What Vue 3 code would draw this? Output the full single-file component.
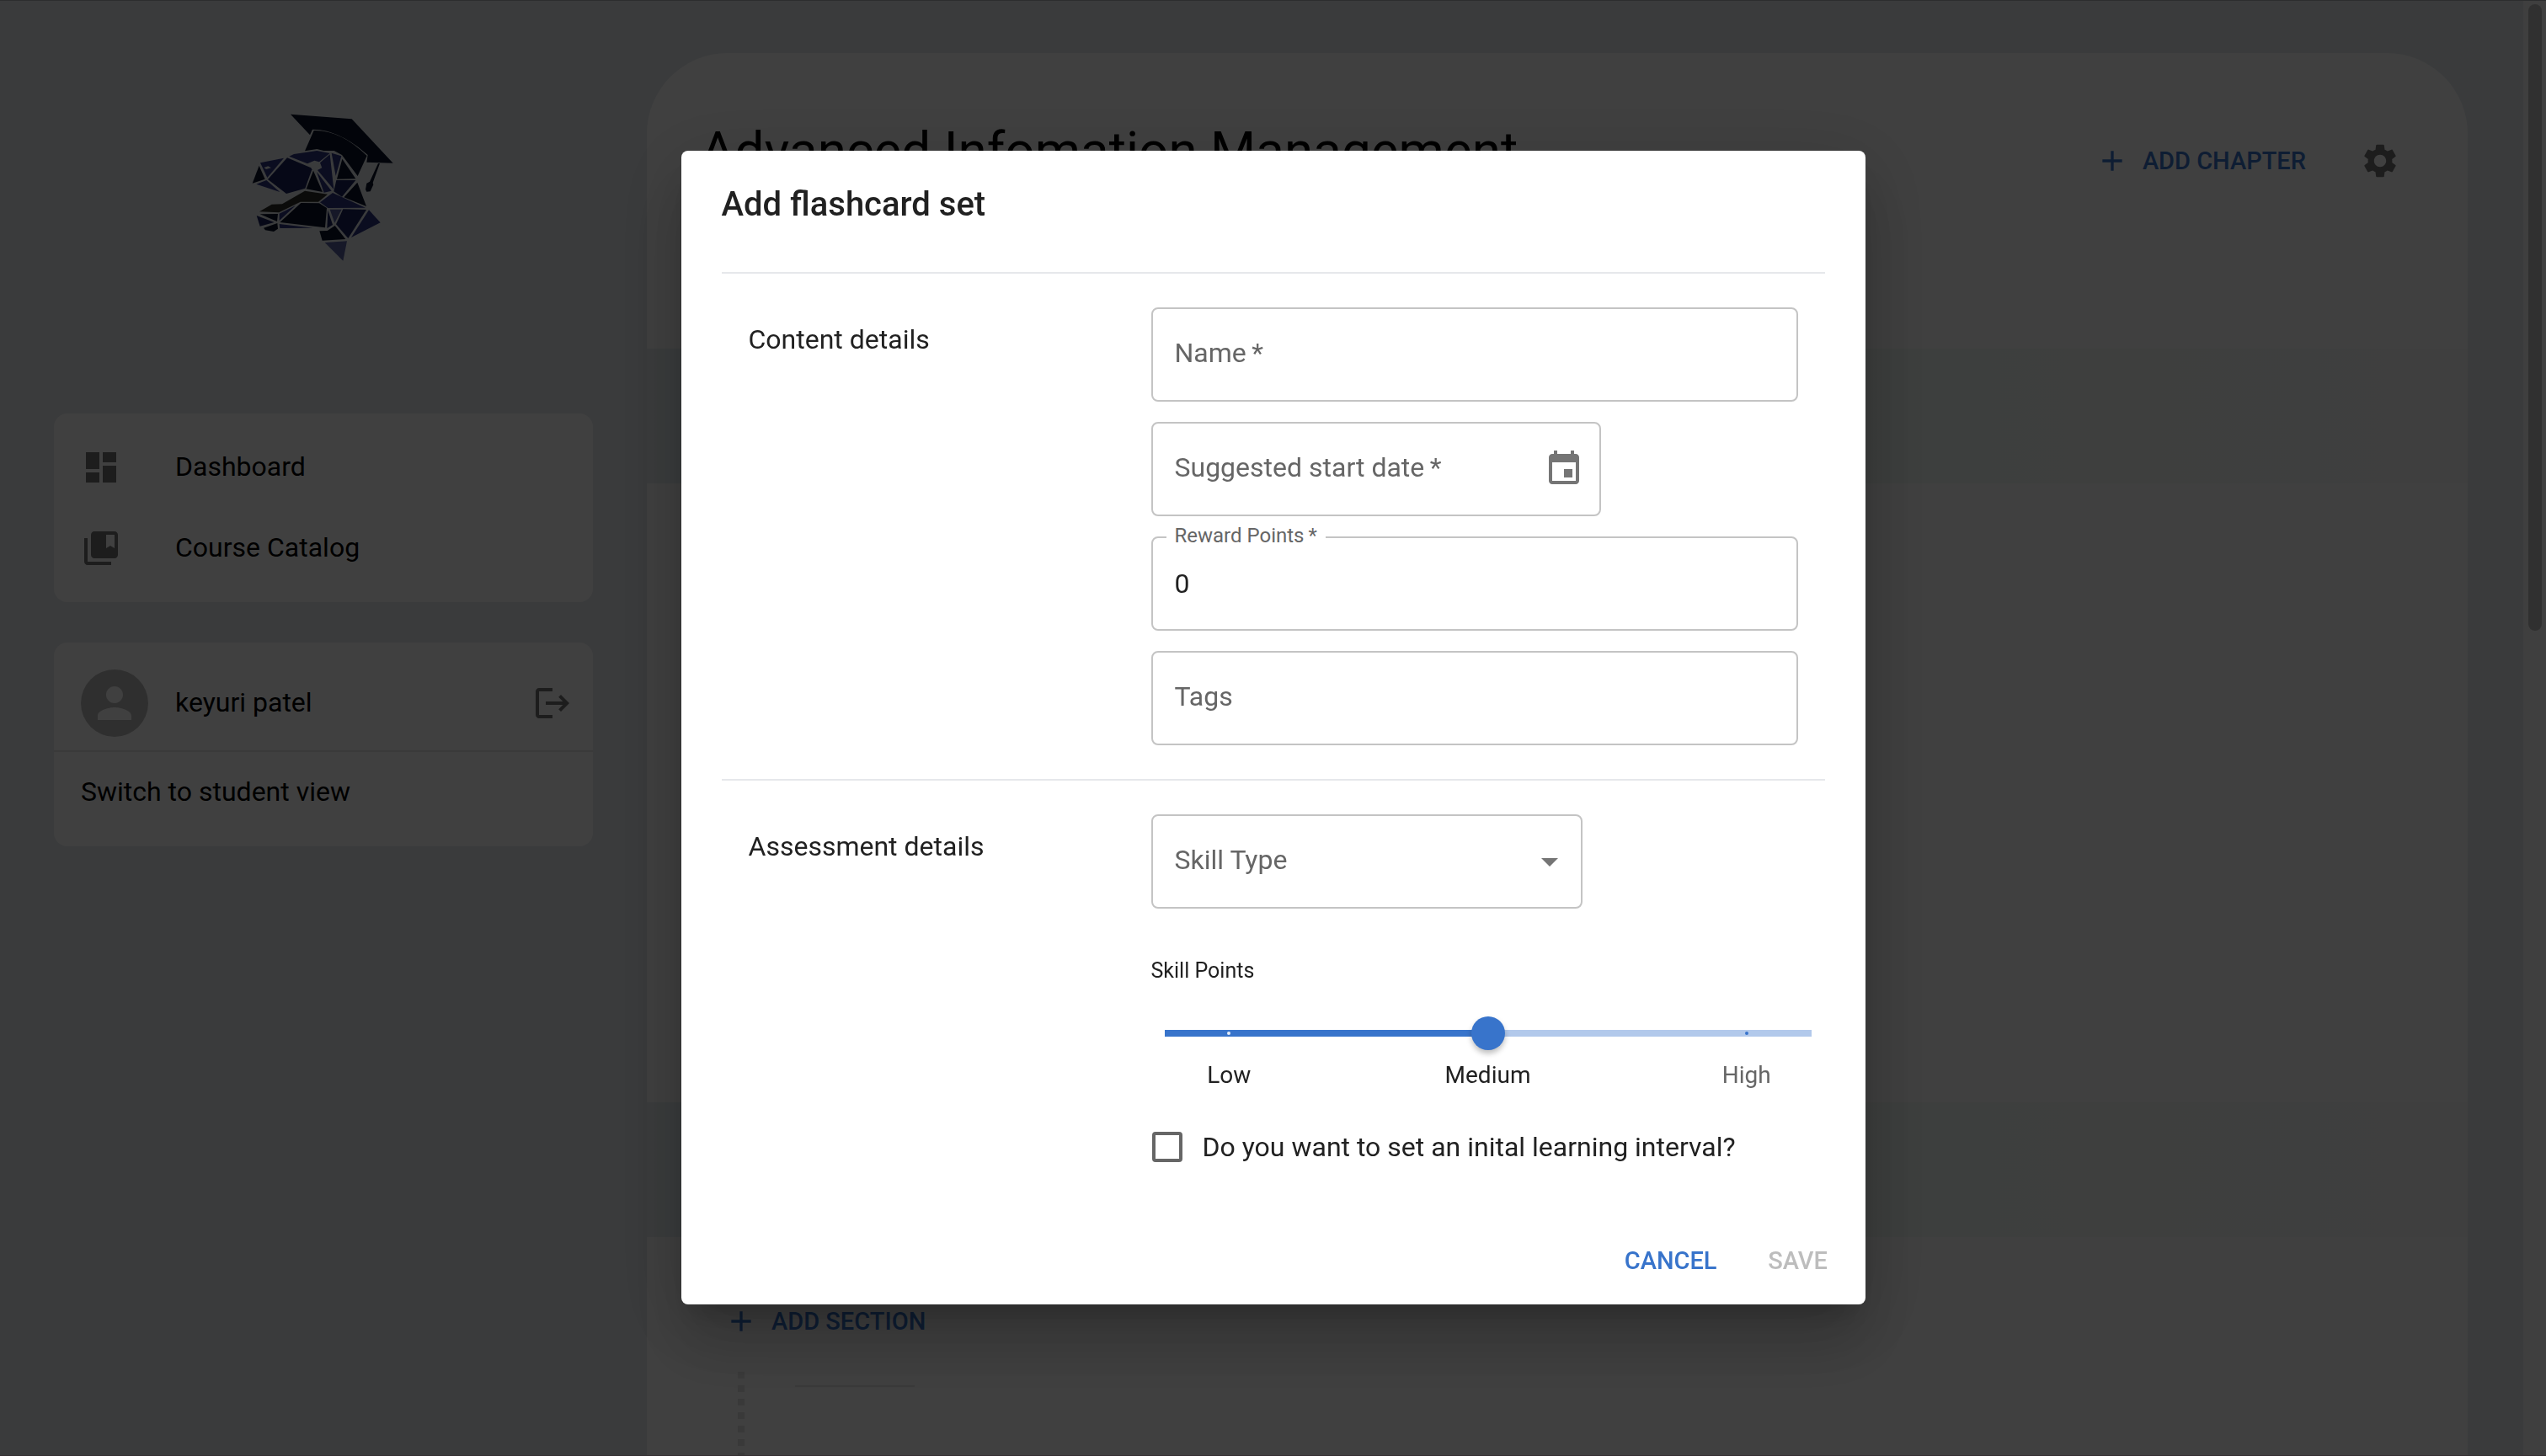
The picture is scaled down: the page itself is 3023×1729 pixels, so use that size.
<script setup>
import { ref } from 'vue'

const name = ref('')
const startDate = ref('')
const rewardPoints = ref('0')
const tags = ref('')
const skillType = ref('')
const skillPoints = ref(5)
const learningInterval = ref(false)

const navigation = [
  {
    label: 'Dashboard',
    icon: 'M3 13h8V3H3v10zm0 8h8v-6H3v6zm10 0h8V11h-8v10zm0-18v6h8V3h-8z',
  },
  {
    label: 'Course Catalog',
    icon: 'M4 6H2v14c0 1.1.9 2 2 2h14v-2H4V6zm16-4H8c-1.1 0-2 .9-2 2v12c0 1.1.9 2 2 2h12c1.1 0 2-.9 2-2V4c0-1.1-.9-2-2-2zm0 10-2.5-1.5L15 12V4h5v8z',
  },
]

const plusIcon = 'M19 13h-6v6h-2v-6H5v-2h6V5h2v6h6v2z'
</script>

<template>
  <div class="page">
    <div class="shell">
      <aside class="sidebar">
        <div class="brand">
          <svg class="logo" viewBox="0 0 690 660" role="img" aria-label="Dino logo">
            <g fill="#18205c">
              <path fill="#081028" d="M228 77 446 94 593 251 499 248 503 222C440 165 370 130 306 131L297 151Z" />
              <path fill="#081028" d="M311 135C375 133 440 165 500 225L467 297 411 222 383 207 346 207 322 201 279 208Z" />
              <path fill="#081028" d="M540 252h6L521 321 523 328 512 352 499 353 495 345 499 323 510 317Z" />
              <path fill="#2c3480" d="M223 227 240 219 322 207 368 216 330 247 313 242 288 253Z" />
              <path fill="#2c3480" d="M120 250 204 233 145 303Z" />
              <path fill="#2c3480" d="M333 250 368 220 382 345 324 276 340 268Z" />
              <path fill="#2c3480" d="M374 215 409 226 389 297Z" />
              <path d="M216 232 301 268 304 274 280 341 213 360 147 309Z" />
              <path fill="#2c3480" d="M106 326 142 312 190 354Z" />
              <path fill="#081028" d="M116 260 137 308 92 323Z" />
              <path fill="#081028" d="M309 278 342 354 284 343Z" />
              <path fill="#2c3480" d="M321 282 374 350 347 356Z" />
              <path fill="#081028" d="M412 236 460 307 393 308Z" />
              <path d="M391 312 460 312 411 371 382 352Z" />
              <path fill="#081028" d="M466 320 498 405 418 373Z" />
              <path fill="#2c2c28" d="M117 424 161 398 198 397 279 350 360 362 327 389 263 389 187 427Z" />
              <path fill="#2c3480" d="M378 357 495 410 361 411 333 391Z" />
              <path fill="#081028" d="M265 393 330 394 357 411 351 481 190 462Z" />
              <path fill="#2c3480" d="M188 431 246 402 188 456Z" />
              <path fill="#081028" d="M119 433 183 432 180 459Z" />
              <path d="M107 438 170 462 119 476Z" />
              <path fill="#081028" d="M132 482 181 465 183 485 168 495 138 490Z" />
              <path fill="#2c3480" d="M188 468 308 482 190 483Z" />
              <path fill="#081028" d="M331 493 359 492 386 474 424 522 341 527Z" />
              <path d="M361 419 378 471 358 483Z" />
              <path fill="#5860a0" d="M368 416 410 416 385 464Z" />
              <path d="M415 415 498 417 433 519 390 469Z" />
              <path fill="#2c3480" d="M507 418 548 463 444 516Z" />
              <path fill="#5860a0" d="M350 534 429 529 415 599Z" />
            </g>
            <path fill="#e6eaee" d="M133 267 148 262 159 268 141 273Z" />
          </svg>
        </div>

        <nav class="card">
          <a v-for="item in navigation" :key="item.label" class="row" href="#">
            <span class="lead">
              <svg class="icon muted" viewBox="0 0 24 24" aria-hidden="true"><path :d="item.icon" /></svg>
            </span>
            <span class="grow">{{ item.label }}</span>
          </a>
        </nav>

        <section class="card">
          <div class="row user">
            <span class="lead">
              <span class="avatar">
                <svg class="person" viewBox="0 0 24 24" aria-hidden="true">
                  <path d="M12 12c2.21 0 4-1.79 4-4s-1.79-4-4-4-4 1.79-4 4 1.79 4 4 4zm0 2c-2.67 0-8 1.34-8 4v2h16v-2c0-2.66-5.33-4-8-4z" />
                </svg>
              </span>
            </span>
            <span class="grow">keyuri patel</span>
            <button class="icon-button" type="button" aria-label="Log out">
              <svg class="icon muted" viewBox="0 0 24 24" aria-hidden="true">
                <path d="M17 7l-1.41 1.41L18.17 11H8v2h10.17l-2.58 2.58L17 17l5-5zM4 5h8V3H4c-1.1 0-2 .9-2 2v14c0 1.1.9 2 2 2h8v-2H4V5z" />
              </svg>
            </button>
          </div>
          <a class="row divided" href="#"><span class="grow">Switch to student view</span></a>
        </section>
      </aside>

      <main class="course">
        <header class="course-header">
          <h1>Advanced Infomation Management</h1>
          <div class="course-actions">
            <button class="text-button" type="button">
              <svg class="plus" viewBox="0 0 24 24" aria-hidden="true"><path :d="plusIcon" /></svg>
              ADD CHAPTER
            </button>
            <button class="icon-button" type="button" aria-label="Course settings">
              <svg class="icon muted" viewBox="0 0 24 24" aria-hidden="true">
                <path d="M19.14 12.94c.04-.3.06-.61.06-.94 0-.32-.02-.64-.07-.94l2.03-1.58c.18-.14.23-.41.12-.61l-1.92-3.32c-.12-.22-.37-.29-.59-.22l-2.39.96c-.5-.38-1.03-.7-1.62-.94l-.36-2.54c-.04-.24-.24-.41-.48-.41h-3.84c-.24 0-.43.17-.47.41l-.36 2.54c-.59.24-1.13.57-1.62.94l-2.39-.96c-.22-.08-.47 0-.59.22L2.74 8.87c-.12.21-.08.47.12.61l2.03 1.58c-.05.3-.09.63-.09.94s.02.64.07.94l-2.03 1.58c-.18.14-.23.41-.12.61l1.92 3.32c.12.22.37.29.59.22l2.39-.96c.5.38 1.03.7 1.62.94l.36 2.54c.05.24.24.41.48.41h3.84c.24 0 .44-.17.47-.41l.36-2.54c.59-.24 1.13-.56 1.62-.94l2.39.96c.22.08.47 0 .59-.22l1.92-3.32c.12-.22.07-.47-.12-.61l-2.01-1.58zM12 15.6c-1.98 0-3.6-1.62-3.6-3.6s1.62-3.6 3.6-3.6 3.6 1.62 3.6 3.6-1.62 3.6-3.6 3.6z" />
              </svg>
            </button>
          </div>
        </header>
        <div class="chapter"></div>
        <div class="chapter-body"></div>
        <div class="chapter"></div>
        <div class="add-section">
          <button class="text-button" type="button">
            <svg class="plus" viewBox="0 0 24 24" aria-hidden="true"><path :d="plusIcon" /></svg>
            ADD SECTION
          </button>
        </div>
        <div class="timeline">
          <div class="dots"></div>
          <div class="stub"></div>
        </div>
      </main>
    </div>
    <div class="scroll-track"><div class="scroll-thumb"></div></div>

    <div class="backdrop">
      <form class="dialog" role="dialog" aria-labelledby="dialog-title" @submit.prevent>
        <h2 id="dialog-title">Add flashcard set</h2>

        <section class="group">
          <h3>Content details</h3>
          <div class="fields">
            <div class="field">
              <label for="name">Name&thinsp;*</label>
              <input id="name" v-model="name" type="text" />
            </div>
            <div class="field date">
              <label for="start">Suggested start date&thinsp;*</label>
              <input id="start" v-model="startDate" type="text" />
              <button class="icon-button adornment" type="button" aria-label="Choose date">
                <svg class="icon" viewBox="0 0 24 24" aria-hidden="true">
                  <path d="M17 12h-5v5h5v-5zM16 1v2H8V1H6v2H5c-1.11 0-1.99.9-1.99 2L3 19c0 1.1.89 2 2 2h14c1.1 0 2-.9 2-2V5c0-1.1-.9-2-2-2h-1V1h-2zm3 18H5V8h14v11z" />
                </svg>
              </button>
            </div>
            <div class="field filled">
              <label for="reward">Reward Points&thinsp;*</label>
              <input id="reward" v-model="rewardPoints" type="text" inputmode="numeric" />
            </div>
            <div class="field">
              <label for="tags">Tags</label>
              <input id="tags" v-model="tags" type="text" />
            </div>
          </div>
        </section>

        <section class="group">
          <h3>Assessment details</h3>
          <div class="fields">
            <div class="field skill">
              <label for="skill">Skill Type</label>
              <select id="skill" v-model="skillType"><option value=""></option></select>
              <svg class="icon adornment arrow" viewBox="0 0 24 24" aria-hidden="true"><path d="M7 10l5 5 5-5z" /></svg>
            </div>
            <div class="points">
              <label class="caption" for="points">Skill Points</label>
              <div class="slider">
                <input id="points" v-model="skillPoints" type="range" min="0" max="10" />
                <span class="mark low"></span>
                <span class="mark high"></span>
              </div>
              <div class="scale">
                <span>Low</span>
                <span>Medium</span>
                <span class="inactive">High</span>
              </div>
            </div>
            <label class="check">
              <input v-model="learningInterval" type="checkbox" />
              <span>Do you want to set an inital learning interval?</span>
            </label>
          </div>
        </section>

        <footer class="dialog-actions">
          <button class="text-button" type="button">CANCEL</button>
          <button class="text-button" type="submit" disabled>SAVE</button>
        </footer>
      </form>
    </div>
  </div>
</template>

<style>
html,
body {
  height: 100%;
}

body {
  margin: 0;
  overflow: hidden;
}
</style>

<style scoped>
* {
  box-sizing: border-box;
}

.page {
  display: flex;
  height: 100vh;
  overflow: hidden;
  background: #e6ebef;
  color: #000;
  font: 400 32px/48px Roboto, sans-serif;
}

button,
input,
select {
  font: inherit;
  color: inherit;
}

button {
  padding: 0;
  border: 0;
  background: none;
}

h1,
h2,
h3 {
  margin: 0;
}

.shell {
  flex: 1;
  display: flex;
  gap: 64px;
  min-width: 0;
  padding: 0 66px 0 64px;
}

.sidebar {
  flex: none;
  display: flex;
  flex-direction: column;
  gap: 48px;
  width: 640px;
}

.brand {
  display: flex;
  justify-content: center;
  height: 443px;
  padding-top: 110px;
}

.logo {
  width: 230px;
  height: 220px;
}

.card {
  padding: 16px 0;
  border-radius: 16px;
  background: #fff;
}

.row {
  display: flex;
  align-items: center;
  min-height: 96px;
  padding: 0 24px 0 32px;
  color: inherit;
  text-decoration: none;
}

.row.user {
  min-height: 112px;
}

.row.divided {
  border-top: 2px solid #e8e8e8;
  min-height: 98px;
}

.lead {
  display: flex;
  width: 112px;
}

.grow {
  flex: 1;
  padding-bottom: 2px;
}

.avatar {
  display: flex;
  align-items: center;
  justify-content: center;
  width: 80px;
  height: 80px;
  border-radius: 50%;
  background: #bdbdbd;
}

.person {
  width: 60px;
  height: 60px;
  fill: #fff;
}

.icon {
  display: block;
  width: 48px;
  height: 48px;
  fill: #757575;
}

.icon-button {
  display: flex;
}

.course {
  flex: 1;
  min-width: 0;
  height: 100vh;
  margin-top: 63px;
  border-radius: 96px 96px 0 0;
  background: #fff;
}

.course-header {
  display: flex;
  justify-content: space-between;
  height: 351px;
  padding: 80px 80px 0 64px;
}

h1 {
  font-size: 62px;
  font-weight: 400;
  line-height: 72px;
}

.course-actions {
  display: flex;
  align-items: center;
  gap: 64px;
  height: 96px;
}

.text-button {
  display: flex;
  align-items: center;
  justify-content: center;
  gap: 16px;
  color: #3874cb;
  font-size: 29px;
  font-weight: 500;
}

.plus {
  width: 40px;
  height: 40px;
  fill: currentColor;
}

.chapter {
  height: 160px;
  background: linear-gradient(90deg, #e8eff3, #f2fbf6 65%, #fafafa);
}

.chapter-body {
  height: 735px;
}

.add-section {
  display: flex;
  padding: 76px 0 0 92px;
}

.timeline {
  display: flex;
  gap: 60px;
  padding: 36px 108px;
}

.dots {
  width: 8px;
  height: 160px;
  background: repeating-linear-gradient(#e4e4e4 0 8px, #fff 8px 16px);
}

.stub {
  width: 142px;
  height: 2px;
  margin-top: 16px;
  background: #e4e4e4;
}

.scroll-track {
  width: 27px;
  padding: 5px 5px 0 6px;
  background: #fafafa;
}

.scroll-thumb {
  height: 744px;
  border-radius: 8px;
  background: #c0c0c0;
}

.backdrop {
  position: fixed;
  inset: 0;
  display: flex;
  align-items: center;
  justify-content: center;
  padding-bottom: 1px;
  background: rgba(0, 0, 0, 0.75);
  box-shadow:
    inset 0 1px #2c2d2e,
    inset 0 -1px #352f32;
}

.dialog {
  width: min(1406px, calc(100% - 128px));
  padding: 32px 48px 16px;
  border-radius: 8px;
  background: #fff;
  color: #212121;
  box-shadow:
    0 22px 30px -14px rgba(0, 0, 0, 0.2),
    0 48px 76px 6px rgba(0, 0, 0, 0.14),
    0 18px 92px 16px rgba(0, 0, 0, 0.12);
}

h2 {
  padding-bottom: 48px;
  font-size: 40px;
  font-weight: 500;
  line-height: 64px;
}

.group {
  display: flex;
  padding: 40px 32px;
  border-top: 2px solid #e6e8eb;
}

h3 {
  width: 478px;
  padding-top: 14px;
  font-size: 32px;
  font-weight: 400;
}

.fields {
  flex: 1;
  display: flex;
  flex-direction: column;
  gap: 24px;
  min-width: 0;
}

.field {
  position: relative;
  display: flex;
  height: 112px;
}

.field.date {
  width: 534px;
}

.field.skill {
  width: 512px;
}

.field input,
.field select {
  appearance: none;
  width: 100%;
  padding: 0 26px;
  border: 2px solid #c4c4c4;
  border-radius: 8px;
  background: transparent;
  outline: none;
}

.field label {
  position: absolute;
  top: 30px;
  left: 28px;
  color: #666;
  pointer-events: none;
}

.field.filled label {
  top: -17px;
  left: 18px;
  padding: 0 10px;
  background: #fff;
  font-size: 24px;
  line-height: 32px;
}

.adornment {
  position: absolute;
  top: 32px;
  right: 20px;
}

.adornment.arrow {
  right: 15px;
  pointer-events: none;
}

.points {
  display: flex;
  flex-direction: column;
  padding-top: 30px;
}

.caption {
  font-size: 25px;
  line-height: 40px;
}

.slider {
  position: relative;
  display: flex;
  height: 40px;
  margin: 34px -16px 0 16px;
}

.slider input {
  appearance: none;
  width: 100%;
  height: 40px;
  margin: 0;
  background: linear-gradient(90deg, #3874cb 50%, #b2c9eb 50%) center / 100% 8px no-repeat;
}

.slider input::-webkit-slider-thumb {
  appearance: none;
  width: 40px;
  height: 40px;
  border-radius: 50%;
  background: #3874cb;
  box-shadow: 0 4px 6px rgba(0, 0, 0, 0.25);
}

.mark {
  position: absolute;
  top: 18px;
  width: 4px;
  height: 4px;
  margin-left: -2px;
  border-radius: 2px;
}

.mark.low {
  left: 10%;
  background: #e6edf8;
}

.mark.high {
  left: 90%;
  background: #3874cb;
}

.scale {
  display: grid;
  grid-template-columns: 20% 60% 20%;
  margin: 6px -16px 0 16px;
  font-size: 28px;
  line-height: 48px;
  text-align: center;
}

.inactive {
  color: #666;
}

.check {
  display: flex;
  align-items: center;
  gap: 24px;
  margin-top: 13px;
  padding-left: 1px;
}

.check input {
  appearance: none;
  width: 36px;
  height: 36px;
  margin: 0;
  border: 4px solid #666;
  border-radius: 4px;
}

.check input:checked {
  border-color: #3874cb;
  background: #3874cb;
}

.dialog-actions {
  display: flex;
  justify-content: flex-end;
  gap: 16px;
  margin: 35px -32px 0 0;
}

.dialog-actions .text-button {
  min-width: 128px;
  height: 72px;
  padding: 0 16px;
}

.dialog-actions .text-button:disabled {
  color: #bdbdbd;
}
</style>
